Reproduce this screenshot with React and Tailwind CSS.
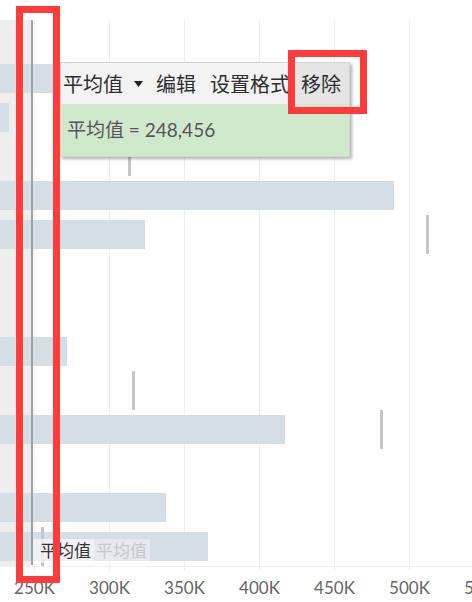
import React from "react";

const FONT = { fontFamily: 'Lato, "Noto Sans CJK SC", sans-serif' };

// 75px per 50K, 250K sits at x = 35
const axis = ["250K", "300K", "350K", "400K", "450K", "500K", "550K"];

const rows = [
  {},
  { bar: 250 },
  { bar: 9 },
  { tick: 129 },
  { bar: 394 },
  { bar: 145, tick: 427 },
  {},
  {},
  { bar: 67 },
  { tick: 133 },
  { bar: 285, tick: 381 },
  {},
  { bar: 166 },
  { bar: 208, tick: 42 },
];

function Row({ bar, tick }) {
  return (
    <div className="relative flex h-[39px] items-center">
      {bar && <div className="h-[29px] bg-[#d5dde5]" style={{ width: bar }} />}
      {tick && <div className="absolute top-0 h-[39px] w-[3px] bg-[#c6c6c6]" style={{ left: tick - 1 }} />}
    </div>
  );
}

function Menu() {
  return (
    <div className="absolute left-[60px] top-[62px] w-[290px] border border-[#d4d4d4] shadow-[2px_2px_3px_rgba(0,0,0,0.3)]">
      <div className="flex h-[41px] items-stretch bg-[#f3f3f3] text-[20px] text-[#2e2e2e]">
        <span className="flex items-center pl-[2px]">平均值</span>
        <span className="ml-[11px] flex items-center">
          <svg width="9" height="6" viewBox="0 0 9 6">
            <path d="M0 0h9L4.5 6z" fill="#222" />
          </svg>
        </span>
        <span className="ml-[13px] flex items-center">编辑</span>
        <span className="ml-[14px] flex items-center">设置格式</span>
        <span className="ml-auto flex items-center bg-[#e5e5e5] px-[8px]">移除</span>
      </div>
      <div className="flex h-[52px] items-center bg-[#d0e9cc] pl-[6px] text-[19px] text-[#555]">
        平均值 = 248,456
      </div>
    </div>
  );
}

export default function App() {
  return (
    <div className="relative h-[602px] w-[472px] overflow-hidden bg-white" style={FONT}>
      {/* background: shaded band + gridlines */}
      <div className="absolute inset-x-0 top-[20px] flex h-[550px]">
        <div className="h-[546px] w-[31px] shrink-0 bg-[#eeeeee]" />
        <div className="flex shrink-0 pl-[3px]">
          {axis.map((a) => (
            <div key={a} className="h-full w-[75px] shrink-0 border-l border-[#efefef]" />
          ))}
        </div>
      </div>

      <div className="relative flex flex-col pt-[20px]">
        {/* bars */}
        <div className="flex flex-col">
          {rows.map((r, i) => (
            <Row key={i} {...r} />
          ))}
        </div>
        <div className="h-px w-full bg-[#efefef]" />

        {/* axis labels */}
        <div className="ml-[-3px] mt-[9px] flex">
          {axis.map((a) => (
            <div key={a} className="w-[75px] shrink-0 text-center text-[17px] leading-[24px] text-[#666]">
              {a}
            </div>
          ))}
        </div>
      </div>

      {/* average line */}
      <div className="absolute left-[31px] top-[20px] h-[545px] w-[2px] bg-[#a0a0a0]" />

      {/* average labels */}
      <div className="absolute left-[33px] top-[539px] flex h-[24px] items-center text-[17px]">
        <span className="flex h-full items-center bg-white/60 pl-[7px] pr-[3px] text-[#333]">平均值</span>
        <span className="flex h-full items-center bg-white/40 pl-[2px] pr-[3px] text-[#c4c8cc]">平均值</span>
      </div>

      <Menu />

      {/* annotation boxes */}
      <div className="absolute left-[16px] top-[6px] h-[577px] w-[44px] border-[7px] border-[#ff3b3b]" />
      <div className="absolute left-[288px] top-[50px] h-[64px] w-[79px] border-[7px] border-[#ff3b3b]" />
    </div>
  );
}
